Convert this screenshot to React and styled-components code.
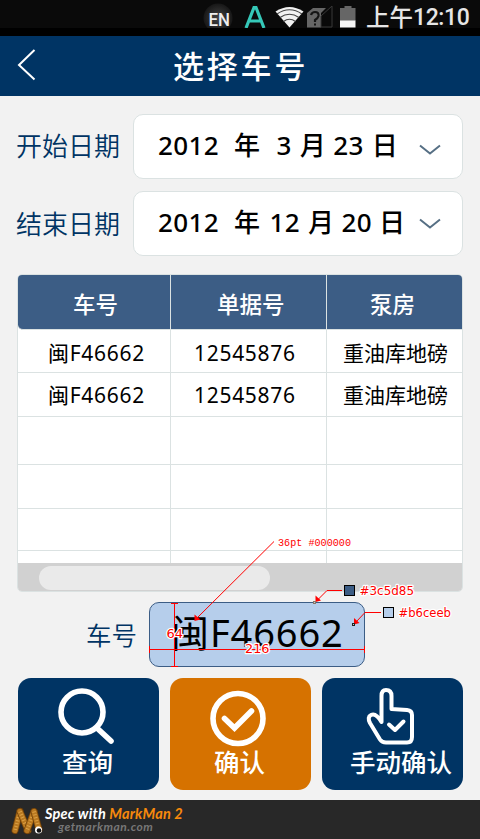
import React from 'react';
import styled, { createGlobalStyle } from 'styled-components';

const GlobalStyle = createGlobalStyle`
  *, *::before, *::after { box-sizing: border-box; }
  body {
    margin: 0;
    background: #f2f2f2;
    font-family: 'Noto Sans', 'Noto Sans CJK SC', sans-serif;
  }
`;

const Screen = styled.div`
  position: relative;
  width: 480px;
  height: 839px;
  display: flex;
  flex-direction: column;
  overflow: hidden;
  background: #f2f2f2;
`;

const StatusBar = styled.div`
  flex: none;
  height: 36px;
  padding-left: 203px;
  display: flex;
  align-items: flex-start;
  background: linear-gradient(#0a0a0a 28px, #000 28px);
`;

const StatusIcons = styled.svg`
  flex: none;
  width: 160px;
  height: 28px;
`;

const Clock = styled.div`
  display: flex;
  padding-left: 3px;
  color: #e6e6e6;
  white-space: nowrap;
`;

const Meridiem = styled.span`
  font: 500 23.5px/32px 'Noto Sans CJK SC', sans-serif;
`;

const Time = styled.span`
  font: 500 23px/35px Roboto, sans-serif;
  letter-spacing: -0.4px;
`;

const Header = styled.header`
  flex: none;
  height: 60px;
  display: flex;
  align-items: center;
  background: #003464;
  color: #fff;
`;

const BackIcon = styled.svg`
  width: 20px;
  height: 34px;
  margin: 0 0 4px 17px;
`;

const Title = styled.h1`
  margin: 0 0 0 136px;
  padding-bottom: 3px;
  font: 500 31px/57px 'Noto Sans CJK SC', sans-serif;
  letter-spacing: 2.8px;
  white-space: nowrap;
`;

const Filters = styled.section`
  flex: none;
  display: flex;
  flex-direction: column;
  gap: 12px;
  padding: 18px 17px 0 16px;
`;

const FilterRow = styled.div`
  height: 65px;
  display: flex;
`;

const Label = styled.label`
  width: 117px;
  height: 65px;
  flex: none;
  color: #003464;
  font: 350 26px/${(p) => p.$line}px 'Noto Sans CJK SC', sans-serif;
  white-space: nowrap;
`;

const DateBox = styled.div`
  flex: 1;
  display: flex;
  align-items: center;
  padding-left: 24px;
  border: 1px solid #dbe2e2;
  border-radius: 10px;
  background: #fff;
  color: #000;
`;

const DatePart = styled.span`
  margin-left: ${(p) => p.$gap}px;
  padding-bottom: ${(p) => p.$lift}px;
  font: 500 26px/36px 'Noto Sans', 'Noto Sans CJK SC', sans-serif;
  letter-spacing: 0.4px;
  white-space: nowrap;
`;

const Chevron = styled.svg`
  width: 22px;
  height: 12px;
  margin: ${(p) => p.$top}px 21px 0 auto;
`;

const Table = styled.section`
  flex: none;
  width: 446px;
  height: 318px;
  margin: 18px 0 0 17px;
  display: flex;
  flex-direction: column;
  border: 1px solid #dbe2e2;
  border-radius: 5px;
  overflow: hidden;
  background: #fff;
`;

const TableRow = styled.div`
  flex: none;
  display: grid;
  grid-template-columns: 153px 156px 1fr;
  height: ${(p) => p.$height}px;
  border-bottom: ${(p) => (p.$last ? 'none' : '1px solid #dbe2e2')};
`;

const Cell = styled.div`
  display: flex;
  align-items: center;
  padding-left: ${(p) => p.$left}px;
  padding-top: ${(p) => p.$top || 0}px;
  border-right: 1px solid #dbe2e2;
  font: 400 21px/28px 'Noto Sans', 'Noto Sans CJK SC', sans-serif;
  letter-spacing: ${(p) => p.$spacing || 0}px;
  white-space: nowrap;
  color: #000;
  &:last-child { border-right: 0; }
`;

const HeadRow = styled(TableRow)`
  background: #3c5d85;
  border-bottom-left-radius: 5px;
`;

const HeadCell = styled(Cell)`
  font: 500 22.5px/28px 'Noto Sans CJK SC', sans-serif;
  color: #fff;
`;

const ScrollTrack = styled.div`
  flex: 1;
  padding: 3px 0 1px 21px;
  background: #d1d1d1;
`;

const ScrollThumb = styled.div`
  width: 231px;
  height: 24px;
  border-radius: 12px;
  background: #eaeaea;
`;

const PlateRow = styled.section`
  flex: none;
  height: 65px;
  margin-top: 10px;
  padding-left: 86px;
  display: flex;
`;

const PlateLabel = styled.label`
  width: 63px;
  color: #003464;
  font: 350 25.5px/63px 'Noto Sans CJK SC', sans-serif;
`;

const PlateField = styled.div`
  width: 216px;
  padding-left: 21px;
  border: 1px solid #3c5d85;
  border-radius: 10px;
  background: #b6ceeb;
  color: #000;
  font: 400 38px/58px 'Noto Sans', 'Noto Sans CJK SC', sans-serif;
  letter-spacing: 0.9px;
  white-space: nowrap;
`;

const Actions = styled.div`
  flex: none;
  display: flex;
  gap: 11px;
  margin: 11px 17px 10px 18px;
`;

const ActionButton = styled.button`
  flex: none;
  width: 141px;
  height: 112px;
  margin: 0;
  padding: 6px 0 0 ${(p) => p.$left}px;
  display: flex;
  flex-direction: column;
  align-items: flex-start;
  border: 0;
  border-radius: 13px;
  background: ${(p) => p.$color};
  color: #fff;
  font: 500 25.5px/34px 'Noto Sans CJK SC', sans-serif;
  white-space: nowrap;
`;

const ActionIcon = styled.svg`
  width: 64px;
  height: 60px;
  overflow: visible;
  margin-left: ${(p) => p.$shift}px;
`;

const ActionText = styled.span`
  height: 34px;
`;

const Footer = styled.footer`
  flex: none;
  height: 39px;
  display: flex;
  background: #282828;
`;

const Mascot = styled.svg`
  width: 45px;
  height: 39px;
`;

const Credit = styled.div`
  font-family: Lato, sans-serif;
  font-style: italic;
  font-weight: 700;
  white-space: nowrap;
`;

const CreditTitle = styled.div`
  height: 19px;
  padding-top: 4px;
  color: #fff;
  font-size: 14.5px;
  line-height: 20px;
  letter-spacing: 0.18px;
`;

const Brand = styled.span`
  color: #f7890c;
`;

const CreditLink = styled.div`
  padding-left: 13px;
  color: #777;
  font-size: 12px;
  line-height: 16px;
  letter-spacing: 0.5px;
`;

const SpecOverlay = styled.svg`
  position: absolute;
  left: 149px;
  top: 530px;
  width: 331px;
  height: 145px;
  pointer-events: none;
`;

const SpecText = styled.text`
  font: 400 ${(p) => p.$size || 12.5}px ${(p) => p.$family || "'DejaVu Sans'"}, sans-serif;
  fill: #f00;
  stroke: ${(p) => (p.$plain ? 'none' : '#fff')};
  stroke-width: 2.5px;
  stroke-linejoin: round;
  paint-order: stroke;
`;

const dates = [
  { label: '开始日期', line: 62, lift: 4, chevron: 6, parts: [['2012', 0], ['年', 15], ['3', 16], ['月', 8], ['23', 7], ['日', 8]] },
  { label: '结束日期', line: 64, lift: 3, chevron: 1, parts: [['2012', 0], ['年', 15], ['12', 9], ['月', 8], ['20', 7], ['日', 7]] },
];

const rows = [
  { plate: '闽F46662', receipt: '12545876', room: '重油库地磅', height: 43, top: 4 },
  { plate: '闽F46662', receipt: '12545876', room: '重油库地磅', height: 44, top: 0 },
];

const emptyRows = [48, 44, 42];

const legs = [
  'M20 16 L15 35',
  'M20 16 L28 35',
  'M34 16 L27 35',
  'M34 16 L39 34',
];

export default function App() {
  return (
    <>
      <GlobalStyle />
      <Screen>
        <StatusBar>
          <StatusIcons viewBox="203 0 160 28">
            <defs>
              <radialGradient id="badge">
                <stop offset="0" stopColor="#444" />
                <stop offset="1" stopColor="#171717" />
              </radialGradient>
            </defs>
            <circle cx="218" cy="18" r="14.5" fill="url(#badge)" />
            <text x="208.5" y="25.5" fontFamily="Roboto, sans-serif" fontWeight="500" fontSize="18" textLength="21.5" lengthAdjust="spacingAndGlyphs" fill="#eee">EN</text>
            <path d="M246 28 L254 7.5 H256 L264 28 M248.5 21 H261" fill="none" stroke="#35c8b8" strokeWidth="3.2" />
            <path d="M275.5 11.5 Q289.5 2.5 303.5 11.5 L289.5 27.5Z" fill="#f2f2f2" />
            <path d="M277 14 Q289.5 5.5 302 14 M280 17.5 Q289.5 11 299 17.5 M283.5 21.5 Q289.5 17 295.5 21.5" fill="none" stroke="#444" strokeWidth="1.1" />
            <path d="M307 27.5 V13 L313 8 H326 L321 13 V27.5Z" fill="#666" />
            <path d="M321 16 L332 6 V27 H321Z" fill="#090909" stroke="#383838" />
            <path d="M311 15 Q312 12 315 12 Q319 12 318.5 16 Q318 18 315 20 V22 M314 24.5 H316" fill="none" stroke="#151515" strokeWidth="2.2" />
            <path d="M340 8 H344.5 V6 H351.5 V8 H355.5 V21 H340Z" fill="#666" />
            <path d="M340 20.5 H355.5 V27.5 H340Z" fill="#f5f5f5" />
          </StatusIcons>
          <Clock>
            <Meridiem>上午</Meridiem>
            <Time>12:10</Time>
          </Clock>
        </StatusBar>

        <Header>
          <BackIcon viewBox="0 0 20 34" fill="none" stroke="#fff" strokeWidth="2">
            <path d="M17.5 3 L2 18 L17.5 32.5" />
          </BackIcon>
          <Title>选择车号</Title>
        </Header>

        <Filters>
          {dates.map((d) => (
            <FilterRow key={d.label}>
              <Label $line={d.line}>{d.label}</Label>
              <DateBox>
                {d.parts.map(([text, gap]) => (
                  <DatePart key={text} $gap={gap} $lift={d.lift}>{text}</DatePart>
                ))}
                <Chevron $top={d.chevron} viewBox="0 0 22 12" fill="none" stroke="#566f84" strokeWidth="2">
                  <path d="M1 1.5 L11 9.5 L21 1.5" />
                </Chevron>
              </DateBox>
            </FilterRow>
          ))}
        </Filters>

        <Table>
          <HeadRow $height={55}>
            <HeadCell $left={55} $top={2}>车号</HeadCell>
            <HeadCell $left={46} $top={2}>单据号</HeadCell>
            <HeadCell $left={43} $top={2}>泵房</HeadCell>
          </HeadRow>
          {rows.map((r, i) => (
            <TableRow key={i} $height={r.height}>
              <Cell $left={30} $top={r.top} $spacing={0.7}>{r.plate}</Cell>
              <Cell $left={23} $top={r.top} $spacing={0.7}>{r.receipt}</Cell>
              <Cell $left={16} $top={r.top}>{r.room}</Cell>
            </TableRow>
          ))}
          {emptyRows.map((height, i) => (
            <TableRow key={i} $height={height}>
              <Cell /><Cell /><Cell />
            </TableRow>
          ))}
          <TableRow $height={12} $last>
            <Cell /><Cell /><Cell />
          </TableRow>
          <ScrollTrack>
            <ScrollThumb />
          </ScrollTrack>
        </Table>

        <PlateRow>
          <PlateLabel>车号</PlateLabel>
          <PlateField>闽F46662</PlateField>
        </PlateRow>

        <Actions>
          <ActionButton $color="#003464" $left={44}>
            <ActionIcon $shift={-10} viewBox="52 684 64 60" fill="none" stroke="#fff" strokeLinecap="round">
              <circle cx="82" cy="712" r="21" strokeWidth="5.6" />
              <path d="M98 729 L111 741" strokeWidth="5.6" />
            </ActionIcon>
            <ActionText>查询</ActionText>
          </ActionButton>
          <ActionButton $color="#d67200" $left={44}>
            <ActionIcon $shift={-8} viewBox="206 684 64 60" fill="none" stroke="#fff" strokeLinecap="round">
              <circle cx="238" cy="718.5" r="25" strokeWidth="5.6" />
              <path d="M224.5 718.5 L234.5 728 L251.5 711" strokeWidth="5.6" />
            </ActionIcon>
            <ActionText>确认</ActionText>
          </ActionButton>
          <ActionButton $color="#003464" $left={28}>
            <ActionIcon $shift={12} viewBox="362 684 64 60" fill="none" stroke="#fff" strokeWidth="4" strokeLinecap="round" strokeLinejoin="round">
              <path d="M381.5 722 V696 Q381.5 690 386 690 Q391.5 690 391.5 696 V709 L407 710 Q412 710.5 412 715 V737 Q412 742.5 407 742.5 H386 Q382 742.5 380 739.5 L370 723 Q367 717 371 715 Q376 712.5 381.5 722 Z" />
              <path d="M389 724.5 L395 730 L403.5 721.5" />
            </ActionIcon>
            <ActionText>手动确认</ActionText>
          </ActionButton>
        </Actions>

        <Footer>
          <Mascot viewBox="0 0 45 39" fill="none" strokeLinecap="round">
            {legs.map((d, i) => (
              <g key={i} transform="translate(0 -4.5)">
                <path d={d} stroke="#704009" strokeWidth="7" />
                <path d={d} stroke="#b87820" strokeWidth="5.4" />
                <path d={d} stroke="#dca045" strokeWidth="3.6" strokeDasharray="1 2" strokeLinecap="butt" />
              </g>
            ))}
            <circle cx="38.5" cy="30" r="3.5" fill="#fff" />
            <circle cx="39" cy="30.5" r="2.3" fill="#111" />
          </Mascot>
          <Credit>
            <CreditTitle>Spec with <Brand>MarkMan 2</Brand></CreditTitle>
            <CreditLink>getmarkman.com</CreditLink>
          </Credit>
        </Footer>

        <SpecOverlay viewBox="149 530 331 145">
          <g fill="none" stroke="#f00">
            <path d="M274 541.5 L196 619" />
            <path d="M174.5 603 V667 M171 603.5 H178 M171 666.5 H178" />
            <path d="M149 649.5 H365 M149.5 646 V653 M364.5 646 V653" />
            <path d="M342 590.5 H327 L318 599.5" />
            <path d="M381 612.5 H365 L356 622" />
          </g>
          <g fill="#f00">
            <path d="M194.5 621 V614.5 L200.5 619.5Z" />
            <path d="M315.5 602 V595.5 L321 600.5Z" />
            <path d="M354 624.5 V618 L359.5 623Z" />
          </g>
          <rect x="313.5" y="601.5" width="2" height="2" fill="#ccc" stroke="#876" />
          <rect x="352.5" y="623.5" width="2" height="2" fill="#ccc" stroke="#222" />
          <rect x="344.5" y="585.5" width="10" height="10" fill="#3c5d85" stroke="#000" />
          <rect x="383.5" y="607.5" width="10" height="10" fill="#b6ceeb" stroke="#000" />
          <SpecText $plain $size={11.5} $family="'Liberation Mono'" x="278" y="546" textLength="73" lengthAdjust="spacingAndGlyphs">36pt #000000</SpecText>
          <SpecText x="359.5" y="595" textLength="54.5" lengthAdjust="spacingAndGlyphs">#3c5d85</SpecText>
          <SpecText x="398.5" y="617" textLength="52.5" lengthAdjust="spacingAndGlyphs">#b6ceeb</SpecText>
          <SpecText x="166.5" y="638" textLength="16.5" lengthAdjust="spacingAndGlyphs">64</SpecText>
          <SpecText x="245" y="653" textLength="24.5" lengthAdjust="spacingAndGlyphs">216</SpecText>
        </SpecOverlay>
      </Screen>
    </>
  );
}
